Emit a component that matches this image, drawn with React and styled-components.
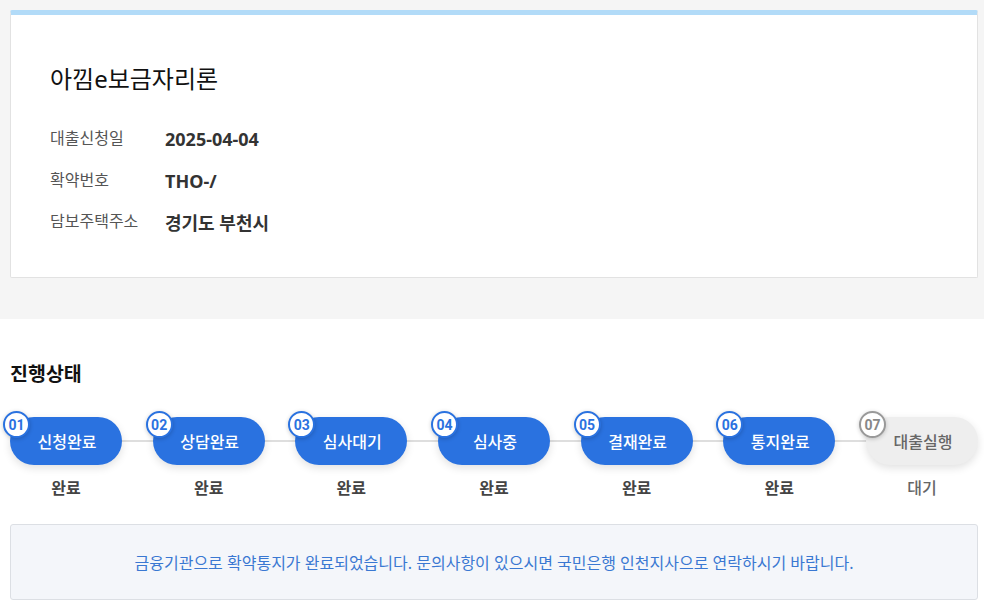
import React from 'react';
import styled, { createGlobalStyle } from 'styled-components';

const GlobalStyle = createGlobalStyle`
  html, body {
    margin: 0;
    padding: 0;
    background: #ffffff;
  }
  body {
    font-family: "Noto Sans", "Noto Sans CJK KR", sans-serif;
    color: #222;
  }
  * {
    box-sizing: border-box;
  }
`;

const TopArea = styled.div`
  background: #f5f5f5;
  padding: 10px 6px 41px 10px;
`;

const Card = styled.div`
  background: #fff;
  border: 1px solid #e2e2e2;
  border-top: 5px solid #b2dbf8;
  border-radius: 2px;
  padding: 49px 40px 43px 39px;
`;

const ProductTitle = styled.h1`
  margin: 0 0 33px;
  font-size: 24px;
  line-height: 30px;
  font-weight: 400;
  color: #111;
`;

const InfoList = styled.dl`
  margin: 0;
  display: flex;
  flex-direction: column;
  gap: 17.5px;
`;

const InfoRow = styled.div`
  display: flex;
  align-items: center;
  height: 24px;
`;

const InfoLabel = styled.dt`
  width: 115px;
  font-size: 16px;
  color: #555;
  margin-top: -4px;
`;

const InfoValue = styled.dd`
  margin: 0;
  font-size: 18px;
  font-weight: 700;
  color: #333;
`;

const ProgressSection = styled.section`
  padding: 42px 6px 0 10px;
`;

const SectionTitle = styled.h2`
  margin: 0 0 25px;
  font-size: 19.5px;
  line-height: 26px;
  font-weight: 700;
  color: #111;
`;

const Steps = styled.ol`
  position: relative;
  list-style: none;
  margin: 0;
  padding: 0;
  display: flex;
  justify-content: space-between;

  &::before {
    content: '';
    position: absolute;
    left: 56px;
    right: 56px;
    top: 28px;
    height: 2px;
    background: #dedede;
  }
`;

const Step = styled.li`
  position: relative;
  width: 112px;
  padding-top: 5px;
  display: flex;
  flex-direction: column;
  align-items: center;
`;

const Pill = styled.div`
  width: 112px;
  height: 48px;
  border-radius: 24px;
  display: flex;
  align-items: center;
  justify-content: center;
  padding-left: 2px;
  font-size: 16px;
  font-weight: 500;
  background: ${(p) => (p.$done ? '#2a72e0' : '#eeeeee')};
  color: ${(p) => (p.$done ? '#fff' : '#666')};
  box-shadow: 0 3px 8px rgba(0, 0, 0, 0.12);
  position: relative;
  z-index: 1;
`;

const Num = styled.span`
  position: absolute;
  left: -7px;
  top: -1px;
  z-index: 2;
  width: 27px;
  height: 27px;
  border-radius: 50%;
  background: #fff;
  border: 2px solid ${(p) => (p.$done ? '#2a72e0' : '#999')};
  color: ${(p) => (p.$done ? '#2a72e0' : '#888')};
  font-family: "Roboto", "Noto Sans", sans-serif;
  font-size: 14px;
  font-weight: 700;
  display: flex;
  align-items: center;
  justify-content: center;
  box-shadow: 0 1px 4px rgba(0, 0, 0, 0.2);
`;

const StepStatus = styled.span`
  margin-top: 10px;
  font-size: 16px;
  font-weight: ${(p) => (p.$done ? 700 : 500)};
  color: ${(p) => (p.$done ? '#444' : '#666')};
`;

const Notice = styled.div`
  margin: 25px 0 0;
  height: 76px;
  display: flex;
  align-items: center;
  justify-content: center;
  background: #f4f6fa;
  border: 1px solid #dcdfe4;
  border-radius: 3px;
  font-size: 16px;
  color: #3a78d2;
`;

const steps = [
  { no: '01', name: '신청완료', done: true },
  { no: '02', name: '상담완료', done: true },
  { no: '03', name: '심사대기', done: true },
  { no: '04', name: '심사중', done: true },
  { no: '05', name: '결재완료', done: true },
  { no: '06', name: '통지완료', done: true },
  { no: '07', name: '대출실행', done: false },
];

const info = [
  ['대출신청일', '2025-04-04'],
  ['확약번호', 'THO-/'],
  ['담보주택주소', '경기도 부천시'],
];

const App = () => (
  <>
    <GlobalStyle />
    <TopArea>
      <Card>
        <ProductTitle>아낌e보금자리론</ProductTitle>
        <InfoList>
          {info.map(([label, value]) => (
            <InfoRow key={label}>
              <InfoLabel>{label}</InfoLabel>
              <InfoValue>{value}</InfoValue>
            </InfoRow>
          ))}
        </InfoList>
      </Card>
    </TopArea>
    <ProgressSection>
      <SectionTitle>진행상태</SectionTitle>
      <Steps>
        {steps.map((s) => (
          <Step key={s.no}>
            <Num $done={s.done}>{s.no}</Num>
            <Pill $done={s.done}>{s.name}</Pill>
            <StepStatus $done={s.done}>{s.done ? '완료' : '대기'}</StepStatus>
          </Step>
        ))}
      </Steps>
      <Notice>
        금융기관으로 확약통지가 완료되었습니다. 문의사항이 있으시면 국민은행 인천지사으로 연락하시기 바랍니다.
      </Notice>
    </ProgressSection>
  </>
);

export default App;
